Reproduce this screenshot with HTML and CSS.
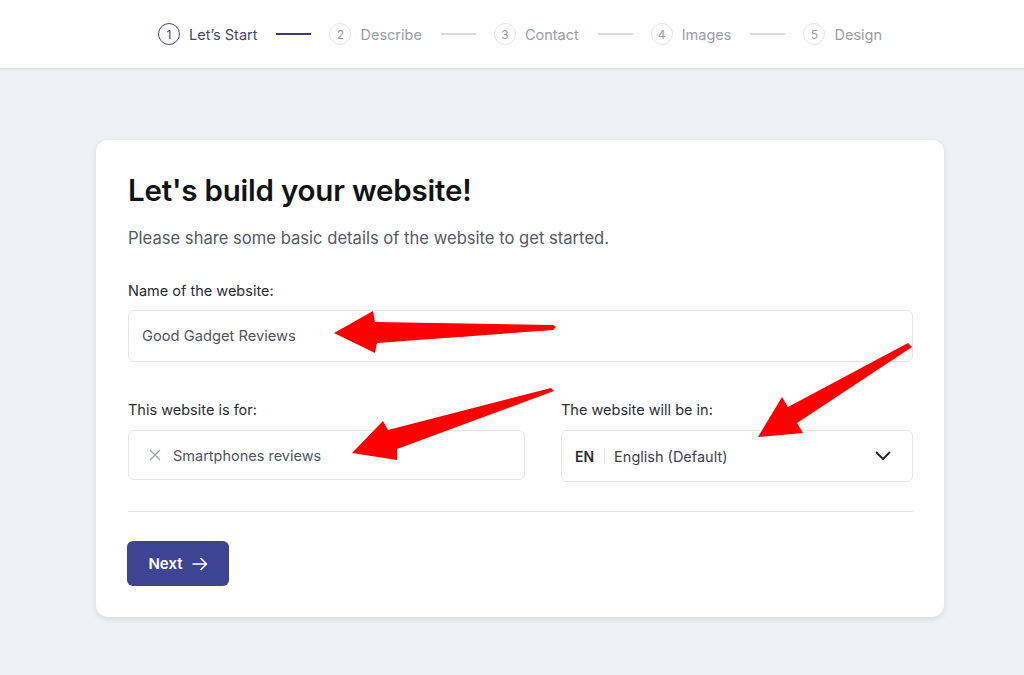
FILE: index.html
```html
<!DOCTYPE html>
<html lang="en">
<head>
<meta charset="utf-8">
<title>Let's build your website</title>
<link rel="stylesheet" href="styles.css">
</head>
<body>
<header class="topbar">
  <nav class="steps">
    <div class="step active"><span class="num">1</span><span class="label">Let’s Start</span></div>
    <span class="sep active"></span>
    <div class="step"><span class="num">2</span><span class="label">Describe</span></div>
    <span class="sep"></span>
    <div class="step"><span class="num">3</span><span class="label">Contact</span></div>
    <span class="sep"></span>
    <div class="step"><span class="num">4</span><span class="label">Images</span></div>
    <span class="sep"></span>
    <div class="step"><span class="num">5</span><span class="label">Design</span></div>
  </nav>
</header>
<main class="main">
  <section class="card">
    <h1 class="title">Let's build your website!</h1>
    <p class="subtitle">Please share some basic details of the website to get started.</p>
    <div class="field">
      <label class="field-label">Name of the website:</label>
      <div class="input input-name">Good Gadget Reviews</div>
    </div>
    <div class="row">
      <div class="field">
        <label class="field-label">This website is for:</label>
        <div class="input input-tags">
          <svg class="x-icon" width="12" height="12" viewBox="0 0 12 12"><path d="M1 1L11 11M11 1L1 11" stroke="#9ca0a8" stroke-width="1.3" fill="none"/></svg>
          <span>Smartphones reviews</span>
        </div>
      </div>
      <div class="field">
        <label class="field-label">The website will be in:</label>
        <div class="input input-select">
          <span class="code">EN</span>
          <span class="vsep"></span>
          <span class="lang">English (Default)</span>
          <svg class="chev" width="16" height="10" viewBox="0 0 16 10"><path d="M1.5 1.5L8 8L14.5 1.5" stroke="#222" stroke-width="1.8" fill="none" stroke-linecap="round" stroke-linejoin="round"/></svg>
        </div>
      </div>
    </div>
    <hr class="divider">
    <button class="btn">Next
      <svg width="16" height="14" viewBox="0 0 16 14"><path d="M1 7H14.5M9 1.5L14.5 7L9 12.5" stroke="#fff" stroke-width="1.5" fill="none" stroke-linecap="round" stroke-linejoin="round"/></svg>
    </button>
  </section>
</main>
<svg class="arrows" width="1024" height="675" viewBox="0 0 1024 675">
  <polygon points="334,333 373,311 375,322 553,325 556,327 553,330 377,343 375,353" fill="#ff0000"/>
  <polygon points="352,453 383,421 388,430 551,388 554,391 397,449 397,460" fill="#ff0000"/>
  <polygon points="758,437 782,397 788,407 908,343 912,347 797,423 803,433" fill="#ff0000"/>
</svg>
</body>
</html>
```
FILE: styles.css
```css
* { box-sizing: border-box; }
html, body { margin: 0; padding: 0; }
body {
  font-family: Inter, "Noto Sans", sans-serif;
  background: #eef1f5;
  color: #1a1a1a;
  width: 1024px;
  height: 675px;
  overflow: hidden;
  position: relative;
}
.topbar {
  height: 69px;
  background: #fff;
  border-bottom: 1px solid #dfe2e7;
  box-shadow: 0 1px 3px rgba(0,0,0,0.05);
  display: flex;
  justify-content: center;
  padding-left: 16px;
}
.steps {
  display: flex;
  align-items: center;
  gap: 18px;
}
.step {
  display: flex;
  align-items: center;
  gap: 9px;
  color: #9b9ca6;
  font-size: 14.5px;
}
.step .num {
  width: 22px;
  height: 22px;
  border-radius: 50%;
  border: 1px solid #e4e5e8;
  display: flex;
  align-items: center;
  justify-content: center;
  font-size: 12px;
  color: #9b9ca6;
}
.step.active { color: #46456f; }
.step.active .num { border: 1.5px solid #4b4a7a; color: #46456f; }
.sep {
  width: 35px;
  height: 2px;
  background: #d9dadf;
  margin-left: 1px;
}
.sep.active { background: #3b3b74; }
.main {
  padding: 71px 0 0 96px;
}
.card {
  width: 848px;
  background: #fff;
  border-radius: 12px;
  box-shadow: 0 2px 6px rgba(30,40,60,0.12);
  padding: 32px 31px 31px 32px;
}
.title {
  margin: 0;
  font-size: 29.5px;
  line-height: 36px;
  font-weight: 600;
  color: #111216;
  letter-spacing: -0.2px;
}
.subtitle {
  margin: 18px 0 0;
  font-size: 16.6px;
  line-height: 24px;
  color: #575a62;
}
.field { display: flex; flex-direction: column; }
.card > .field { margin-top: 31px; }
.field-label {
  font-size: 14.5px;
  line-height: 20px;
  color: #2a2c33;
  margin-bottom: 9px;
}
.input {
  border: 1px solid #e6e7ea;
  border-radius: 6px;
  background: #fff;
  display: flex;
  align-items: center;
  font-size: 14.7px;
  color: #52555c;
}
.input-name { height: 52px; padding-left: 13px; }
.row {
  display: grid;
  grid-template-columns: 397px 1fr;
  gap: 36px;
  margin-top: 38px;
}
.row .field-label { margin-bottom: 10px; }
.input-tags { height: 50px; padding-left: 20px; gap: 12px; font-size: 14.5px; }
.input-select { height: 52px; padding: 0 21px 0 13px; font-size: 14.5px; }
.code { font-weight: 600; color: #2a2c33; font-size: 14px; }
.vsep { width: 1px; height: 16px; background: #e3e4e7; margin: 0 9px 0 10px; }
.lang { color: #3f4249; flex: 1; }
.chev { display: block; }
.divider {
  border: 0;
  border-top: 1px solid #e3e5e8;
  margin: 29px 0 0;
}
.btn {
  margin-top: 29px;
  height: 45px;
  width: 102px;
  margin-left: -1px;
  background: #3e4493;
  border: 0;
  border-radius: 6px;
  color: #fff;
  font-family: inherit;
  font-size: 15px;
  font-weight: 600;
  display: flex;
  align-items: center;
  justify-content: center;
  gap: 9px;
  padding: 0;
}
.btn svg { display: block; }
.arrows {
  position: absolute;
  left: 0;
  top: 0;
  pointer-events: none;
}
```
